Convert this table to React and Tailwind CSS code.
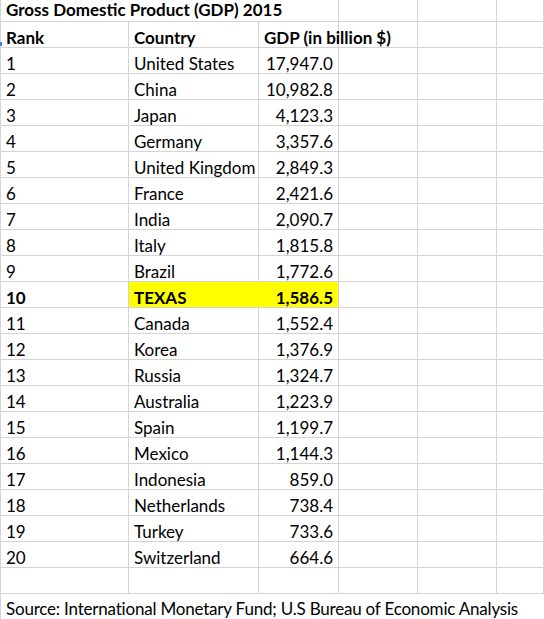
import React from "react";

const rows = [
  ["1", "United States", "17,947.0"],
  ["2", "China", "10,982.8"],
  ["3", "Japan", "4,123.3"],
  ["4", "Germany", "3,357.6"],
  ["5", "United Kingdom", "2,849.3"],
  ["6", "France", "2,421.6"],
  ["7", "India", "2,090.7"],
  ["8", "Italy", "1,815.8"],
  ["9", "Brazil", "1,772.6"],
  ["10", "TEXAS", "1,586.5", true],
  ["11", "Canada", "1,552.4"],
  ["12", "Korea", "1,376.9"],
  ["13", "Russia", "1,324.7"],
  ["14", "Australia", "1,223.9"],
  ["15", "Spain", "1,199.7"],
  ["16", "Mexico", "1,144.3"],
  ["17", "Indonesia", "859.0"],
  ["18", "Netherlands", "738.4"],
  ["19", "Turkey", "733.6"],
  ["20", "Switzerland", "664.6"],
];

function Tail() {
  return (
    <>
      <div className="w-[79px] shrink-0 border-r border-[#d4d4d4]" />
      <div className="w-[79px] shrink-0 border-r border-[#d4d4d4]" />
      <div className="flex-1 border-r border-[#d4d4d4]" />
    </>
  );
}

export default function App() {
  return (
    <div
      className="relative w-[544px] h-[619px] overflow-hidden bg-white text-black text-[17px] leading-none"
      style={{ fontFamily: "Lato, 'Liberation Sans', sans-serif" }}
    >
      <div className="absolute left-0 top-[42px] w-[2px] h-[4px] bg-[#3b82f6]" />
      <div className="border-l border-[#d4d4d4]">
        {/* title row */}
        <div className="flex h-[22px] border-b border-[#d4d4d4]">
          <div className="w-[338px] shrink-0 border-r border-[#d4d4d4] pl-[5px] flex items-end pb-[3px] font-bold whitespace-nowrap">
            Gross Domestic Product (GDP) 2015
          </div>
          <Tail />
        </div>
        {/* header row */}
        <div className="flex h-[26px] border-b border-[#d4d4d4] font-bold">
          <div className="w-[128px] shrink-0 border-r border-[#d4d4d4] pl-[5px] flex items-end pb-[1px]">Rank</div>
          <div className="w-[130px] shrink-0 border-r border-[#d4d4d4] pl-[5px] flex items-end pb-[1px] whitespace-nowrap">Country</div>
          <div className="w-[80px] shrink-0 border-r border-[#d4d4d4] pl-[5px] flex items-end pb-[1px] whitespace-nowrap">GDP (in billion $)</div>
          <Tail />
        </div>
        {rows.map(([rank, country, gdp, hl]) => (
          <div key={rank} className={`flex h-[26px] border-b border-[#d4d4d4] ${hl ? "font-bold" : ""}`}>
            <div className="w-[128px] shrink-0 border-r border-[#d4d4d4] pl-[5px] flex items-end pb-[1px]">{rank}</div>
            {hl ? (
              <div className="w-[210px] shrink-0 border-r border-[#d4d4d4] bg-[#ffff00] flex items-end pb-[1px]">
                <div className="flex-1 pl-[5px]">{country}</div>
                <div className="pr-[5px]">{gdp}</div>
              </div>
            ) : (
              <>
                <div className="w-[130px] shrink-0 border-r border-[#d4d4d4] pl-[5px] flex items-end pb-[1px] whitespace-nowrap">{country}</div>
                <div className="w-[80px] shrink-0 border-r border-[#d4d4d4] pr-[5px] flex items-end justify-end pb-[1px]">{gdp}</div>
              </>
            )}
            <Tail />
          </div>
        ))}
        {/* empty row */}
        <div className="flex h-[26px] border-b border-[#d4d4d4]">
          <div className="w-[128px] shrink-0 border-r border-[#d4d4d4]" />
          <div className="w-[130px] shrink-0 border-r border-[#d4d4d4]" />
          <div className="w-[80px] shrink-0 border-r border-[#d4d4d4]" />
          <Tail />
        </div>
        {/* source row */}
        <div className="flex h-[26px] border-b border-[#d4d4d4] pl-[5px] items-end pb-[2px] whitespace-nowrap tracking-[-0.2px]">
          Source: International Monetary Fund; U.S Bureau of Economic Analysis
        </div>
      </div>
    </div>
  );
}
